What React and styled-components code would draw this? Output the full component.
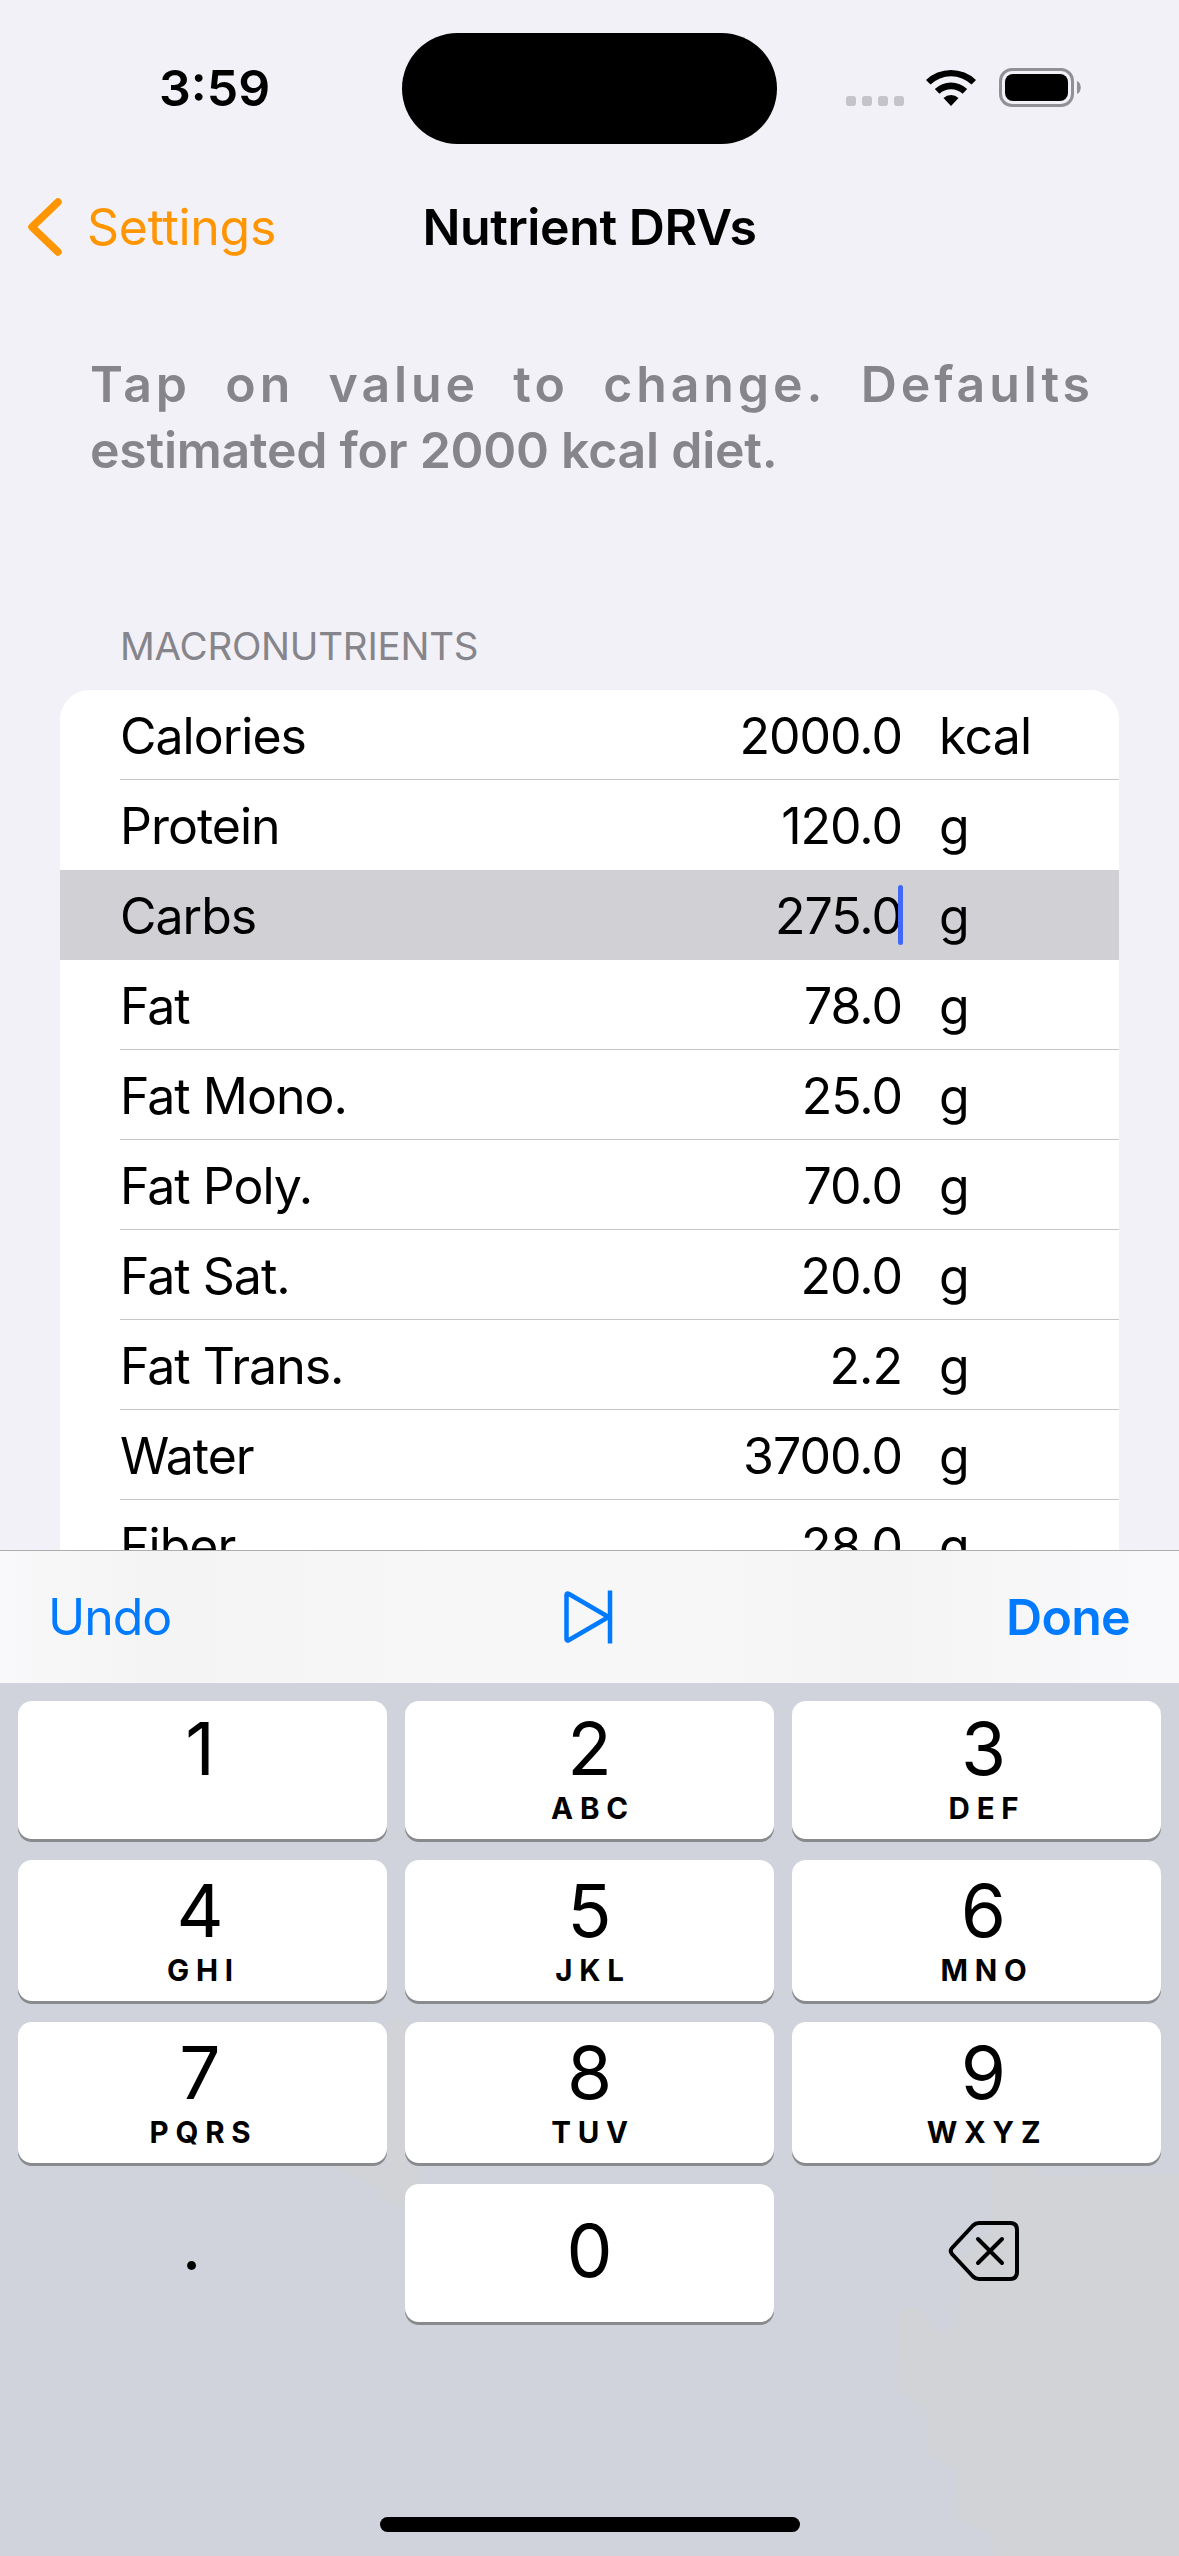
import React from "react";
import styled, { createGlobalStyle } from "styled-components";

const Global = createGlobalStyle`
  html, body { margin: 0; padding: 0; }
  body { background: #f2f1f7; font-family: Inter, "Liberation Sans", sans-serif; }
  * { box-sizing: border-box; }
`;

const Screen = styled.div`
  position: relative;
  width: 1179px;
  height: 2556px;
  overflow: hidden;
  display: flex;
  flex-direction: column;
  background: #f2f1f7;
  color: #000;
`;

const StatusBar = styled.header`
  display: grid;
  grid-template-columns: 402px 375px 402px;
  height: 177px;
  padding-top: 33px;
  align-items: start;
`;

const Clock = styled.div`
  padding-left: 159px;
  height: 111px;
  line-height: 110px;
  font-size: 50px;
  font-weight: 600;
  letter-spacing: ${(p) => p.$track}px;
`;

const Island = styled.div`
  height: 111px;
  border-radius: 56px;
  background: #000;
`;

const Indicators = styled.div`
  display: flex;
  align-items: flex-start;
  padding: 35px 0 0 69px;
`;

const Dots = styled.div`
  display: flex;
  gap: 6px;
  margin: 28px 21px 0 0;
`;

const Dot = styled.i`
  width: 10px;
  height: 10px;
  border-radius: 3px;
  background: #c4c3c8;
`;

const NavBar = styled.nav`
  display: grid;
  grid-template-columns: 402px 375px 402px;
  height: 100px;
  align-items: center;
`;

const Back = styled.a`
  display: flex;
  align-items: center;
  padding-left: 26px;
  color: #ff9500;
  font-size: 50px;
  line-height: 60px;
  letter-spacing: ${(p) => p.$track}px;

  svg { margin-right: 23px; }
`;

const Title = styled.h1`
  margin: 0;
  text-align: center;
  white-space: nowrap;
  font-size: 50px;
  line-height: 60px;
  font-weight: 600;
  letter-spacing: ${(p) => p.$track}px;
`;

const Hint = styled.p`
  margin: 74px 85px 0 90px;
  color: #86858b;
  font-size: 50px;
  font-weight: 600;
  line-height: 66px;
`;

const HintLine = styled.span`
  display: flex;
  justify-content: space-between;
  white-space: pre;
  letter-spacing: ${(p) => p.$track}px;
`;

const SectionLabel = styled.h2`
  margin: 0;
  padding: 139px 0 0 120px;
  height: 207px;
  color: #86858b;
  font-size: 38.5px;
  font-weight: 400;
  line-height: 48px;
  letter-spacing: ${(p) => p.$track}px;
`;

const Card = styled.section`
  margin: 0 60px;
  border-radius: 30px 30px 0 0;
  overflow: hidden;
  background: #fff;
`;

const Row = styled.div`
  display: flex;
  height: 90px;
  padding-left: 60px;
  background: ${(p) => (p.$active ? "#d1d0d5" : "#fff")};
`;

const RowBody = styled.div`
  flex: 1;
  display: grid;
  grid-template-columns: 1fr 400px 180px;
  align-items: center;
  border-bottom: 1px solid ${(p) => (p.$line ? "#c6c6c8" : "transparent")};
  font-size: 50px;
  line-height: 60px;
  padding-top: 3px;
`;

const Name = styled.span`
  letter-spacing: ${(p) => p.$track}px;
`;

const Value = styled.span`
  position: relative;
  text-align: right;
  padding-right: 37px;
  letter-spacing: ${(p) => p.$track}px;
`;

const Caret = styled.i`
  position: absolute;
  right: 36px;
  top: -1px;
  width: 5px;
  height: 60px;
  border-radius: 3px;
  background: #4169f5;
`;

const Unit = styled.span`
  letter-spacing: -0.8px;
`;

const Keyboard = styled.div`
  position: absolute;
  left: 0;
  right: 0;
  top: 1550px;
  height: 1006px;
  display: flex;
  flex-direction: column;
  background: #d0d3db;
`;

const Toolbar = styled.div`
  position: relative;
  display: grid;
  grid-template-columns: 1fr 52px 1fr;
  align-items: center;
  height: 133px;
  padding: 0 49px 0 48px;
  border-top: 1px solid #adadad;
  background: linear-gradient(90deg, #f9f9fb 0, #f7f7f8 50px, #f4f4f4 160px, #f7f7f7 480px, #f7f7f7 680px, #f4f4f4 880px, #f8f8fa 1100px, #f9f9fb 100%);
`;

const SkipSvg = styled.svg`
  display: block;
  margin-left: -1px;
`;

const ToolButton = styled.button`
  border: 0;
  padding: 0;
  background: none;
  color: #007aff;
  font: ${(p) => (p.$strong ? 600 : 400)} 50px/60px Inter, sans-serif;
  letter-spacing: ${(p) => p.$track}px;
  text-align: ${(p) => (p.$strong ? "right" : "left")};
`;

const Tint = styled.div`
  position: absolute;
  left: 0;
  top: 450px;
  width: 1179px;
  height: 556px;
  background: #d2d3d7;
  clip-path: polygon(${(p) => p.$shape});
`;

const Keys = styled.div`
  position: relative;
  display: grid;
  grid-template-columns: repeat(3, 369px);
  grid-template-rows: 138px 141px 141px 138px;
  gap: 21px 18px;
  padding: 18px 18px 0;
`;

/* The outer columns carry their labels slightly off the key's centre. */
const labelInset = { left: "0 5px 0 0", middle: "0", right: "0 0 0 14px" };

const Key = styled.button`
  display: flex;
  border: 0;
  padding: ${(p) => labelInset[p.$side]};
  border-radius: 14px;
  color: #000;
  background: ${(p) => (p.$bare ? "transparent" : "#fff")};
  box-shadow: ${(p) => (p.$bare ? "none" : "0 3px 0 #898a8d")};
  font-family: Inter, sans-serif;
`;

const KeyLabel = styled.span`
  flex: 1;
  align-self: stretch;
  display: flex;
  flex-direction: column;
  align-items: center;
  justify-content: ${(p) => (p.$center ? "center" : "flex-start")};
  padding: ${(p) => (p.$center ? "0 0 5px" : p.$tall ? "6px 0 0" : "3px 0 0")};
`;

const Digit = styled.span`
  font-size: 73px;
  line-height: 90px;
  font-weight: 400;
`;

const Letters = styled.span`
  font-size: 29.5px;
  line-height: 28px;
  font-weight: 650;
  letter-spacing: 6.8px;
  padding-left: 7px;
`;

const Point = styled.span`
  font-size: 68px;
  line-height: 90px;
  padding: 0 17px 11px 0;
`;

const HomeBar = styled.div`
  position: relative;
  width: 420px;
  height: 15px;
  margin: 195px auto 0;
  border-radius: 8px;
  background: #000;
`;

function WifiIcon() {
  return (
    <svg width="52" height="39" viewBox="0 0 52 39">
      <path d="M1 12 A36 36 0 0 1 51 12 L46.500 16.600 A29.500 29.500 0 0 0 5.500 16.600 Z" />
      <path d="M9.800 21 A23.600 23.600 0 0 1 42.200 21 L37.600 25.800 A17 17 0 0 0 14.400 25.800 Z" />
      <path d="M18.500 30 A11 11 0 0 1 33.500 30 L26 38 Z" />
    </svg>
  );
}

const BatterySvg = styled.svg`
  display: block;
  margin-left: 22px;
`;

function BatteryIcon() {
  return (
    <BatterySvg width="84" height="39" viewBox="0 0 84 39">
      <rect x="1.500" y="1.500" width="72" height="36" rx="11.500" fill="none" stroke="#919095" strokeWidth="3" />
      <rect x="6" y="6" width="63" height="27" rx="8" />
      <path d="M78 13 C83 15 83 24 78 26 Z" fill="#919095" />
    </BatterySvg>
  );
}

const rows = [
  ["Calories", "2000.0", "kcal"],
  ["Protein", "120.0", "g"],
  ["Carbs", "275.0", "g"],
  ["Fat", "78.0", "g"],
  ["Fat Mono.", "25.0", "g"],
  ["Fat Poly.", "70.0", "g"],
  ["Fat Sat.", "20.0", "g"],
  ["Fat Trans.", "2.2", "g"],
  ["Water", "3700.0", "g"],
  ["Fiber", "28.0", "g"],
];

const keys = [
  ["1", ""],
  ["2", "ABC"],
  ["3", "DEF"],
  ["4", "GHI"],
  ["5", "JKL"],
  ["6", "MNO"],
  ["7", "PQRS"],
  ["8", "TUV"],
  ["9", "WXYZ"],
];

const sides = ["left", "middle", "right"];

const cornerTint =
  "1179px 174px, 1105px 174px, 1090px 176px, 1040px 176px, 1034px 166px, 992px 166px, 992px 230px, 960px 260px, 958px 320px, 944px 336px, 930px 324px, 915px 306px, 900px 312px, 898px 390px, 928px 412px, 928px 452px, 955px 472px, 958px 520px, 990px 532px, 994px 556px, 1179px 556px";
const middleTint =
  "387px 20px, 405px 20px, 405px 166px, 422px 166px, 416px 184px, 400px 210px, 386px 200px, 366px 180px, 325px 166px, 387px 166px";

export default function App() {
  return (
    <Screen>
      <Global />
      <StatusBar>
        <Clock $track={0}>3:59</Clock>
        <Island />
        <Indicators>
          <Dots>
            <Dot /><Dot /><Dot /><Dot />
          </Dots>
          <WifiIcon />
          <BatteryIcon />
        </Indicators>
      </StatusBar>
      <NavBar>
        <Back $track={-0.3}>
          <svg width="38" height="60" viewBox="0 0 38 60" fill="none">
            <path d="M32 5 L6 30 L32 55" stroke="#ff9500" strokeWidth="7.500" strokeLinecap="round" strokeLinejoin="round" />
          </svg>
          Settings
        </Back>
        <Title $track={-0.4}>Nutrient DRVs</Title>
      </NavBar>
      <Hint>
        <HintLine $track={3.9}>
          {"Tap on value to change. Defaults".split(" ").map((w) => (
            <span key={w}>{w}</span>
          ))}
        </HintLine>
        <HintLine $track={-0.25}>estimated for 2000 kcal diet.</HintLine>
      </Hint>
      <SectionLabel $track={-0.25}>MACRONUTRIENTS</SectionLabel>
      <Card>
        {rows.map(([name, value, unit]) => {
          const active = name === "Carbs";
          return (
            <Row key={name} $active={active}>
              <RowBody $line={!active && name !== "Protein"}>
                <Name $track={-1}>{name}</Name>
                <Value $track={-1}>
                  {value}
                  {active && <Caret />}
                </Value>
                <Unit>{unit}</Unit>
              </RowBody>
            </Row>
          );
        })}
      </Card>
      <Keyboard>
        <Tint $shape={cornerTint} />
        <Tint $shape={middleTint} />
        <Toolbar>
          <ToolButton $track={-1}>Undo</ToolButton>
          <SkipSvg width="52" height="54" viewBox="0 0 52 54" fill="none" stroke="#007aff" strokeWidth="4.500" strokeLinecap="round" strokeLinejoin="round">
            <path d="M4.500 5 Q4.500 2.500 7 4 L46.500 27 L7 50 Q4.500 51.500 4.500 49 Z" />
            <path d="M48 0.500 V53.500" strokeLinecap="butt" />
          </SkipSvg>
          <ToolButton $strong $track={-0.7}>Done</ToolButton>
        </Toolbar>
        <Keys>
          {keys.map(([digit, letters], i) => (
            <Key key={digit} $side={sides[i % 3]}>
              <KeyLabel $tall={i > 2}>
                <Digit>{digit}</Digit>
                {letters && <Letters>{letters}</Letters>}
              </KeyLabel>
            </Key>
          ))}
          <Key $bare $side="left">
            <KeyLabel $center><Point>.</Point></KeyLabel>
          </Key>
          <Key $side="middle">
            <KeyLabel $center><Digit>0</Digit></KeyLabel>
          </Key>
          <Key $bare $side="right">
            <KeyLabel $center>
              <svg width="72" height="62" viewBox="0 0 72 62" fill="none" stroke="#000" strokeWidth="4" strokeLinecap="round" strokeLinejoin="round">
                <path d="M31 3 H62 Q69 3 69 10 V52 Q69 59 62 59 H31 Q27.500 59 25 56.500 L4 34 Q1.500 31 4 28 L25 5.500 Q27.500 3 31 3 Z" />
                <path d="M30 19 L54 43 M54 19 L30 43" />
              </svg>
            </KeyLabel>
          </Key>
        </Keys>
        <HomeBar />
      </Keyboard>
    </Screen>
  );
}
